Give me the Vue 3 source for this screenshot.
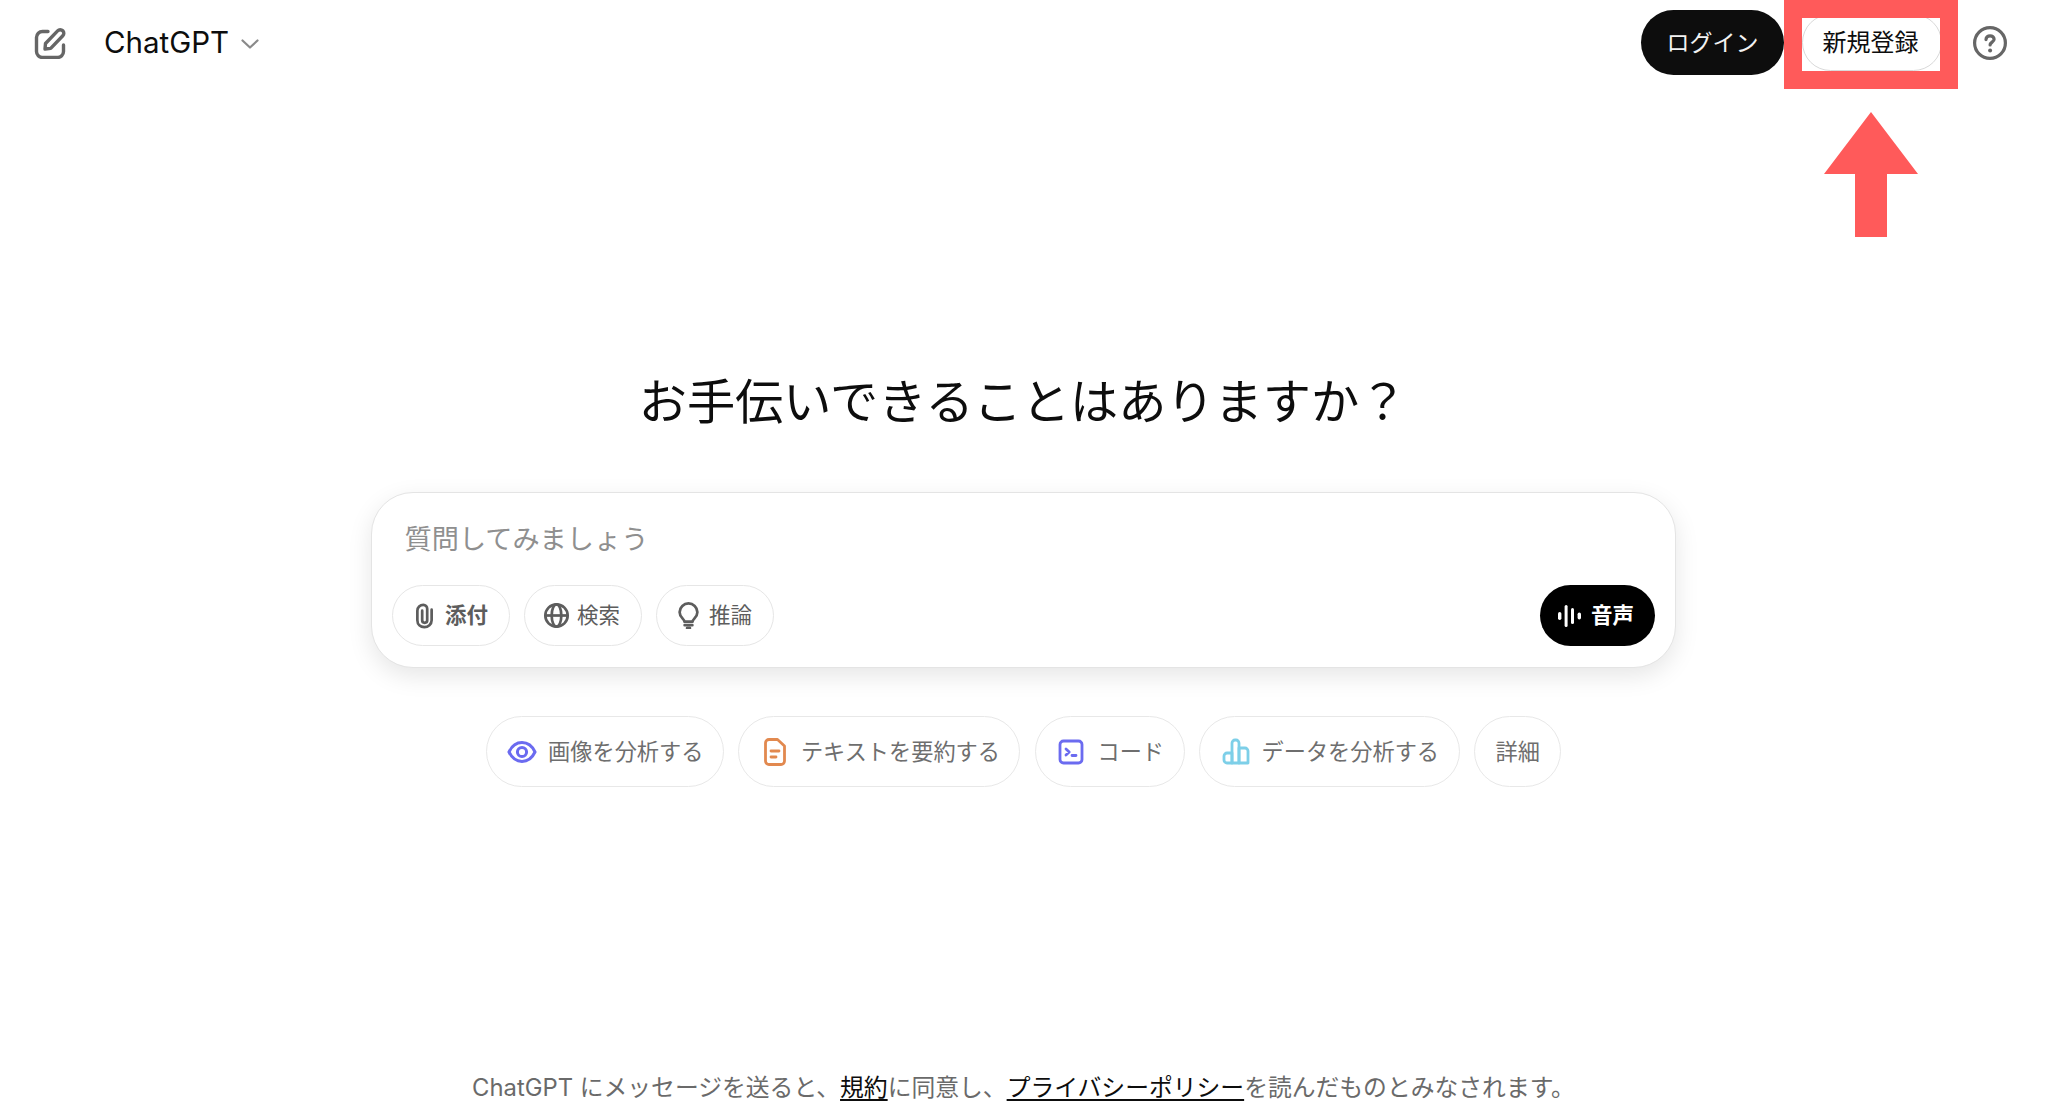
<script setup>
const tools = [
  { label: '添付', icon: 'clip', strong: true },
  { label: '検索', icon: 'globe' },
  { label: '推論', icon: 'bulb' },
]
</script>

<template>
  <div class="page">
    <header class="top">
      <div class="left">
        <svg class="edit" viewBox="0 0 32 32" fill="none" stroke="#666" stroke-width="3.400" stroke-linecap="round" stroke-linejoin="round">
          <path d="M14 4.500H8.500a6 6 0 0 0-6 6v14a6 6 0 0 0 6 6h15a6 6 0 0 0 6-6V18" />
          <path d="M11.500 16.500 23.600 3.800a3.600 3.600 0 0 1 5.200 0 3.600 3.600 0 0 1 0 5L16.700 21.400l-5.700.6z" />
        </svg>
        <span class="brand">ChatGPT</span>
        <svg class="chev" viewBox="0 0 18 10" fill="none" stroke="#8a8a8a" stroke-width="2.200" stroke-linecap="round" stroke-linejoin="round">
          <path d="M1.500 1.500 9 8.500l7.500-7" />
        </svg>
      </div>
      <div class="right">
        <button class="login">ログイン</button>
        <button class="signup">新規登録</button>
        <svg class="help" viewBox="0 0 36 36" fill="none">
          <circle cx="18" cy="18" r="15.400" stroke="#666" stroke-width="3.200" />
          <path d="M14 14.600c0-2.400 1.800-3.800 4.100-3.800s4 1.400 4 3.400c0 2.900-4 3-4 5.800" stroke="#666" stroke-width="3.200" stroke-linecap="round" />
          <circle cx="18.100" cy="25.400" r="2" fill="#666" />
        </svg>
      </div>
    </header>

    <main class="main">
      <h1 class="title">お手伝いできることはありますか？</h1>

      <section class="card">
        <div class="placeholder">質問してみましょう</div>
        <div class="card-row">
          <div class="tools">
            <button v-for="t in tools" :key="t.label" class="tool" :class="{ strong: t.strong }">
              <svg v-if="t.icon === 'clip'" class="ticon" viewBox="0 0 28 28" fill="none" stroke="#5d5d5d" stroke-width="2.800" stroke-linecap="round">
                <path d="M11.600 9v10a2.600 2.600 0 0 0 5.200 0V7a4 4 0 0 0-4-4C9.400 3 6.600 5.600 6.600 9v10c0 4.200 3.200 7 7.200 7s7.600-2.800 7.600-7V8" />
              </svg>
              <svg v-else-if="t.icon === 'globe'" class="ticon" viewBox="0 0 28 28" fill="none" stroke="#5d5d5d" stroke-width="2.800">
                <circle cx="14" cy="14" r="11.600" />
                <ellipse cx="14" cy="14" rx="5" ry="11.600" />
                <path d="M2.400 14h23.200" />
              </svg>
              <svg v-else class="ticon" viewBox="0 0 28 28" fill="none" stroke="#5d5d5d" stroke-width="2.800" stroke-linecap="round" stroke-linejoin="round">
                <path d="M9.800 20.400c0-2.800-5-4.200-5-9.900A9.300 9.300 0 0 1 14 1.500a9.300 9.300 0 0 1 9.200 9c0 5.700-5 7.100-5 9.900z" />
                <path d="M10 24h8M12.500 27h3" />
              </svg>
              <span class="lift">{{ t.label }}</span>
            </button>
          </div>
          <button class="voice">
            <svg class="wave" viewBox="0 0 26 26" fill="#fff">
              <rect x="1" y="9" width="3.400" height="8" rx="1.700" />
              <rect x="7.600" y="2" width="3" height="22" rx="1.500" />
              <rect x="14" y="5" width="3" height="16" rx="1.500" />
              <rect x="20.600" y="9.500" width="3.400" height="7" rx="1.700" />
            </svg>
            <span class="lift">音声</span>
          </button>
        </div>
      </section>

      <nav class="chips">
        <button class="chip">
          <svg class="cicon" viewBox="0 0 30 30" fill="none" stroke="#6b6bf0" stroke-width="3">
            <path d="M2 15C5 8.600 9.500 5.600 15 5.600S25 8.600 28 15c-3 6.400-7.500 9.400-13 9.400S5 21.400 2 15z" />
            <circle cx="15" cy="15" r="4.600" />
          </svg>
          <span class="lift">画像を分析する</span>
        </button>
        <button class="chip">
          <svg class="cicon" viewBox="0 0 30 30" fill="none" stroke="#e2894f" stroke-width="2.800" stroke-linecap="round" stroke-linejoin="round">
            <path d="M9 2.500h8.500L24.500 9v15a3.500 3.500 0 0 1-3.500 3.500H9A3.500 3.500 0 0 1 5.500 24V6A3.500 3.500 0 0 1 9 2.500z" />
            <path d="M11 14h8M11 20h5" />
          </svg>
          <span class="lift">テキストを要約する</span>
        </button>
        <button class="chip">
          <svg class="cicon" viewBox="0 0 30 30" fill="none" stroke="#6b6bf0" stroke-width="2.800" stroke-linecap="round" stroke-linejoin="round">
            <rect x="4" y="4" width="22" height="22" rx="3.500" />
            <path d="M10 12l3.200 3-3.200 3M16 18.500h4" />
          </svg>
          <span class="lift">コード</span>
        </button>
        <button class="chip">
          <svg class="cicon" viewBox="0 0 30 30" fill="none" stroke="#7dcfe8" stroke-width="2.800" stroke-linejoin="round">
            <path d="M11 26V6a3 3 0 0 1 3-3h1a3 3 0 0 1 3 3v20z" />
            <path d="M18 11h6a3 3 0 0 1 3 3v12h-9zM11 16H6a3 3 0 0 0-3 3v4a3 3 0 0 0 3 3h5z" />
          </svg>
          <span class="lift">データを分析する</span>
        </button>
        <button class="chip more"><span class="lift">詳細</span></button>
      </nav>
    </main>

    <footer class="foot">
      ChatGPT にメッセージを送ると、<a class="link">規約</a>に同意し、<a class="link">プライバシーポリシー</a>を読んだものとみなされます。
    </footer>

    <div class="mark-frame"></div>
    <svg class="mark-arrow" viewBox="0 0 94 125">
      <path d="M47 0 94 62H63V125H31V62H0z" fill="#ff5a5a" />
    </svg>
  </div>
</template>

<style>
html, body { margin: 0; background: #fff; }
</style>

<style scoped>
.page {
  position: relative;
  height: 1114px;
  overflow: hidden;
  display: flex;
  flex-direction: column;
  background: #fff;
  font-family: Inter, "Noto Sans CJK JP", sans-serif;
  color: #0d0d0d;
}
button { font-family: inherit; background: none; cursor: pointer; }
.lift { position: relative; top: -2px; }
.top {
  display: flex;
  justify-content: space-between;
  align-items: center;
  height: 85px;
  padding: 0 40px 0 34px;
}
.left { display: flex; align-items: center; }
.edit { width: 32px; height: 32px; }
.brand { margin-left: 38px; font-size: 29.500px; line-height: 1; }
.chev { width: 18px; height: 10px; margin-left: 12px; margin-top: 3px; }
.right { display: flex; align-items: center; }
.login {
  width: 143px;
  height: 65px;
  padding: 0 0 3px;
  border: 0;
  border-radius: 33px;
  background: #0d0d0d;
  color: #f2f2f2;
  font-size: 23px;
}
.signup {
  width: 140px;
  height: 57px;
  margin-left: 18px;
  border: 1px solid #d9d9d9;
  border-radius: 29px;
  background: #fff;
  color: #0d0d0d;
  font-size: 24px;
  padding: 0 3px 4px 0;
}
.help { width: 36px; height: 36px; margin-left: 30px; }
.main { display: flex; flex-direction: column; align-items: center; }
.title {
  margin: 284px 0 0;
  font-size: 48.200px;
  font-weight: 400;
  line-height: 66px;
  transform: translateX(-1px);
  width: 800px;
  text-align: center;
  color: #0d0d0d;
}
.card {
  box-sizing: border-box;
  width: 1305px;
  height: 176px;
  margin: 57px 0 0;
  margin-left: -2px;
  padding: 28px 20px 20px;
  border: 1px solid #e4e4e4;
  border-radius: 42px;
  background: #fff;
  box-shadow: 0 8px 24px rgba(0, 0, 0, 0.1);
}
.placeholder {
  padding-left: 13px;
  font-size: 27.200px;
  line-height: 38px;
  color: #8f8f8f;
}
.card-row {
  display: flex;
  justify-content: space-between;
  margin-top: 26px;
}
.tools { display: flex; gap: 14px; }
.tool {
  display: flex;
  align-items: center;
  justify-content: center;
  gap: 7px;
  box-sizing: border-box;
  width: 118px;
  height: 61px;
  padding: 0 2px 0 0;
  border: 1px solid #e6e6e6;
  border-radius: 31px;
  background: #fff;
  color: #5d5d5d;
  font-size: 21.500px;
}
.tool.strong { font-weight: 700; }
.ticon { width: 27px; height: 27px; }
.voice {
  display: flex;
  align-items: center;
  justify-content: center;
  gap: 8px;
  width: 115px;
  height: 61px;
  padding: 0 3px 0 0;
  border: 0;
  border-radius: 31px;
  background: #000;
  color: #fff;
  font-size: 21.500px;
  font-weight: 700;
}
.wave { width: 26px; height: 26px; }
.chips {
  display: flex;
  gap: 14.500px;
  margin-top: 48px;
  margin-right: 1px;
}
.chip {
  display: flex;
  align-items: center;
  justify-content: center;
  gap: 11px;
  box-sizing: border-box;
  height: 71px;
  padding: 0 19.500px 0 20.500px;
  border: 1px solid #e8e8e8;
  border-radius: 36px;
  background: #fff;
  color: #6e6e6e;
  font-size: 22.200px;
  white-space: nowrap;
}
.cicon { width: 30px; height: 30px; }
.more { padding: 0 20.500px; }
.foot {
  position: absolute;
  left: 0;
  right: 1px;
  top: 1072px;
  text-align: center;
  font-size: 23.800px;
  line-height: 31px;
  color: #6a6a6a;
  white-space: nowrap;
}
.link { color: #0d0d0d; text-decoration: underline; text-underline-offset: 3px; }
.mark-frame {
  position: absolute;
  left: 1784px;
  top: 0;
  box-sizing: border-box;
  width: 174px;
  height: 89px;
  border: 18px solid #ff5a5a;
}
.mark-arrow {
  position: absolute;
  left: 1824px;
  top: 112px;
  width: 94px;
  height: 125px;
}
</style>
